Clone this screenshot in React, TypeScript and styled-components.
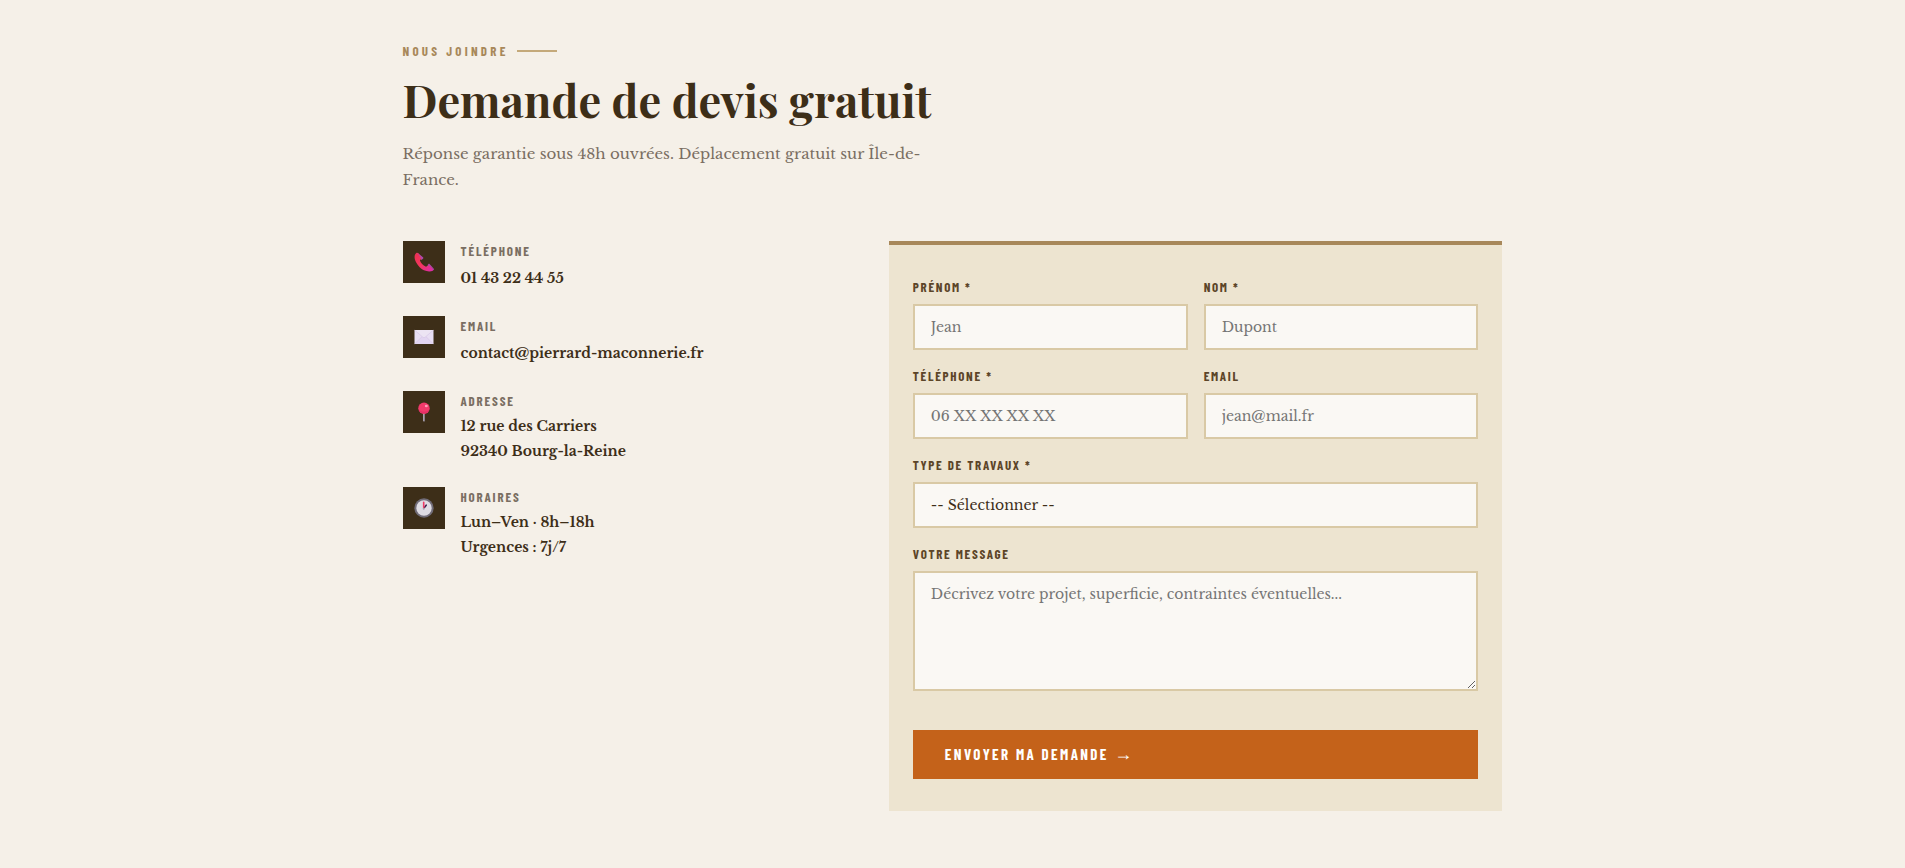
import React from "react";
import styled, { createGlobalStyle } from "styled-components";

const serif = `"Libre Baskerville", "Noto Serif", "Liberation Serif", serif`;
const display = `"Playfair Display", "Liberation Serif", serif`;
const condensed = `"Barlow Condensed", "Liberation Sans", sans-serif`;

const color = {
  page: "#f5f0e8",
  panel: "#ede4d0",
  field: "#faf8f4",
  fieldBorder: "#d9c9a5",
  sand: "#c4a97a",
  stone: "#a8885a",
  dark: "#3d2e18",
  brown: "#5c4528",
  muted: "#7a6e62",
  orange: "#c4621a",
};

const GlobalStyle = createGlobalStyle`
  *, *::before, *::after { box-sizing: border-box; }
  body {
    margin: 0;
    background: ${color.page};
    color: ${color.dark};
    font-family: ${serif};
    font-size: 16px;
  }
`;

const Section = styled.section`
  padding: 40px 32px 56px;
`;

const Container = styled.div`
  max-width: 1100px;
  margin: 0 auto;
`;

const Header = styled.header`
  max-width: 560px;
  margin-bottom: 48px;
`;

const Eyebrow = styled.p`
  display: flex;
  align-items: center;
  gap: 8px;
  margin: 0 0 10px;
  color: ${color.stone};
  font: 700 13px/22px ${condensed};
  letter-spacing: 0.25em;
  text-transform: uppercase;

  &::after {
    content: "";
    width: 40px;
    height: 2px;
    background: ${color.sand};
  }
`;

const Title = styled.h2`
  margin: 0 0 15px;
  font: 700 45px/54px ${display};
`;

const Lead = styled.p`
  margin: 0;
  color: ${color.muted};
  font-size: 15px;
  line-height: 26px;
`;

const Columns = styled.div`
  display: grid;
  grid-template-columns: 1fr 1.4fr;
  gap: 48px;
  align-items: start;

  @media (max-width: 800px) {
    grid-template-columns: 1fr;
  }
`;

const ContactList = styled.div`
  display: flex;
  flex-direction: column;
  gap: 23px;
`;

const ContactItem = styled.div`
  display: flex;
  align-items: flex-start;
  gap: 16px;
`;

const IconTile = styled.div`
  display: flex;
  align-items: center;
  justify-content: center;
  flex: none;
  width: 42px;
  height: 42px;
  background: ${color.dark};
`;

const ContactLabel = styled.div`
  margin-bottom: 3px;
  color: ${color.muted};
  font: 700 13px/20px ${condensed};
  letter-spacing: 0.14em;
  text-transform: uppercase;
`;

const ContactValue = styled.div<{ $single?: boolean }>`
  font-size: 14px;
  font-weight: 700;
  line-height: ${(p) => (p.$single ? 29 : 25)}px;
`;

const ContactLink = styled.a`
  color: inherit;
  text-decoration: none;
`;

const Form = styled.form`
  padding: 32px 24px;
  border-top: 4px solid ${color.stone};
  background: ${color.panel};
`;

const Row = styled.div`
  display: grid;
  grid-template-columns: 1fr 1fr;
  gap: 16px;
`;

const Field = styled.div`
  display: flex;
  flex-direction: column;
  margin-bottom: 16px;
`;

const Label = styled.label`
  margin-bottom: 7px;
  color: ${color.brown};
  font: 700 13px/20px ${condensed};
  letter-spacing: 0.13em;
  text-transform: uppercase;
`;

const control = `
  width: 100%;
  padding: 12px 16px;
  border: 2px solid ${color.fieldBorder};
  border-radius: 0;
  background: ${color.field};
  color: ${color.dark};
  font-family: ${serif};
  font-size: 14px;
  outline: none;
  &::placeholder { color: #757575; }
  &:focus { border-color: ${color.stone}; }
`;

const Input = styled.input`
  ${control}
  height: 46px;
`;

const Select = styled.select`
  ${control}
  height: 46px;
  appearance: none;
`;

const TextArea = styled.textarea`
  ${control}
  display: block;
  height: 120px;
  resize: vertical;
`;

const Submit = styled.button`
  display: block;
  width: 100%;
  margin-top: 39px;
  padding: 12px 32px;
  border: 0;
  background: ${color.orange};
  color: #fff;
  font: 700 15px/25px ${condensed};
  letter-spacing: 0.16em;
  text-align: left;
  text-transform: uppercase;
  cursor: pointer;
`;

const Arrow = styled.span`
  font: 400 18px/18px "Liberation Sans", sans-serif;
`;

const PhoneIcon = () => (
  <svg width="20" height="20" viewBox="0 0 20 20" aria-hidden="true">
    <defs>
      <linearGradient id="phone" x1="0" y1="0" x2="1" y2="1">
        <stop offset="0" stopColor="#e83050" />
        <stop offset="0.5" stopColor="#f5365f" />
        <stop offset="1" stopColor="#d92bb0" />
      </linearGradient>
    </defs>
    <path d="M2 1.200C.5 2.600.2 5 1 7.700c1.200 4 5 8.600 9 10.600 2.900 1.400 6.800 1.500 8.800.4.600-.4.700-1.100.2-1.700l-3-3.700c-.5-.6-1.200-.5-1.700 0l-2.300 1.500C8.900 13.400 6.700 11 5.900 8.300l1.600-1.600c.6-.5.600-1.100.1-1.700L4.400 1.300c-.6-.7-1.700-.7-2.400-.1z" fill="url(#phone)" />
    <path d="M3.500.9 9 5.200c.5.500.4 1.200-.1 1.600L7.400 8.200C7.200 6 5.400 3 3 1.100zM15 11.600l4.600 5c.5.600.4 1.300-.2 1.700-1.300-2.400-3.700-4.300-6-5z" fill="#b048a8" />
  </svg>
);

const MailIcon = () => (
  <svg width="20" height="20" viewBox="0 0 20 20" aria-hidden="true">
    <path d="M.5 3h19v14H.5z" fill="#e8def3" />
    <path d="M.5 17 8 9.500h4l7.500 7.500z" fill="#e2d5f1" />
    <path d="M.5 3h19L11 10.300a1.500 1.500 0 0 1-2 0z" fill="#ece4f3" />
    <path d="m.8 3.300 8.200 7a1.500 1.500 0 0 0 2 0l8.200-7M.8 16.700l7.200-7M19.200 16.700l-7.200-7" fill="none" stroke="#d5c5e6" strokeWidth=".6" />
  </svg>
);

const PinIcon = () => (
  <svg width="20" height="20" viewBox="0 0 20 20" aria-hidden="true">
    <path d="M9.200 10h1.700v9c0 .8-1.700.8-1.700 0z" fill="#8f8996" />
    <path d="M9.200 11h.7v8.200c-.4 0-.7-.2-.7-.5z" fill="#b9b3c0" />
    <circle cx="10" cy="6.200" r="5.700" fill="#f23a6b" />
    <path d="M4.500 7.500a5.700 5.700 0 0 0 11-.2c-2.500 3-8 3.100-11 .2z" fill="#e52f68" />
    <ellipse cx="12.300" cy="4" rx="1.500" ry="1.300" fill="#ff9eb8" />
  </svg>
);

const ClockIcon = () => (
  <svg width="20" height="20" viewBox="0 0 20 20" aria-hidden="true">
    <circle cx="10" cy="10" r="9.700" fill="#716c78" />
    <circle cx="10" cy="10" r="7.700" fill="#dfdce3" />
    <path d="m10.400 9.500 1.800-2.300" stroke="#3a2652" strokeWidth="1.600" strokeLinecap="round" />
    <path d="M9.700 9.500V4.400" stroke="#ee3c66" strokeWidth="1.600" strokeLinecap="round" />
    <circle cx="9.700" cy="10.800" r="1" fill="#a8a2b0" />
  </svg>
);

const App = () => (
  <>
    <GlobalStyle />
    <Section>
      <Container>
        <Header>
          <Eyebrow>Nous joindre</Eyebrow>
          <Title>Demande de devis gratuit</Title>
          <Lead>Réponse garantie sous 48h ouvrées. Déplacement gratuit sur Île-de-France.</Lead>
        </Header>
        <Columns>
          <ContactList>
            <ContactItem>
              <IconTile><PhoneIcon /></IconTile>
              <div>
                <ContactLabel>Téléphone</ContactLabel>
                <ContactValue $single>
                  <ContactLink href="tel:+33143224455">01 43 22 44 55</ContactLink>
                </ContactValue>
              </div>
            </ContactItem>
            <ContactItem>
              <IconTile><MailIcon /></IconTile>
              <div>
                <ContactLabel>Email</ContactLabel>
                <ContactValue $single>
                  <ContactLink href="mailto:contact@pierrard-maconnerie.fr">contact@pierrard-maconnerie.fr</ContactLink>
                </ContactValue>
              </div>
            </ContactItem>
            <ContactItem>
              <IconTile><PinIcon /></IconTile>
              <div>
                <ContactLabel>Adresse</ContactLabel>
                <ContactValue>12 rue des Carriers<br />92340 Bourg-la-Reine</ContactValue>
              </div>
            </ContactItem>
            <ContactItem>
              <IconTile><ClockIcon /></IconTile>
              <div>
                <ContactLabel>Horaires</ContactLabel>
                <ContactValue>Lun–Ven · 8h–18h<br />Urgences : 7j/7</ContactValue>
              </div>
            </ContactItem>
          </ContactList>

          <Form onSubmit={(e) => e.preventDefault()}>
            <Row>
              <Field>
                <Label htmlFor="prenom">Prénom *</Label>
                <Input id="prenom" type="text" placeholder="Jean" />
              </Field>
              <Field>
                <Label htmlFor="nom">Nom *</Label>
                <Input id="nom" type="text" placeholder="Dupont" />
              </Field>
            </Row>
            <Row>
              <Field>
                <Label htmlFor="tel">Téléphone *</Label>
                <Input id="tel" type="tel" placeholder="06 XX XX XX XX" />
              </Field>
              <Field>
                <Label htmlFor="email">Email</Label>
                <Input id="email" type="email" placeholder="jean@mail.fr" />
              </Field>
            </Row>
            <Field>
              <Label htmlFor="travaux">Type de travaux *</Label>
              <Select id="travaux" defaultValue="">
                <option value="">-- Sélectionner --</option>
              </Select>
            </Field>
            <Field>
              <Label htmlFor="message">Votre message</Label>
              <TextArea id="message" placeholder="Décrivez votre projet, superficie, contraintes éventuelles..." />
            </Field>
            <Submit type="submit">Envoyer ma demande <Arrow>→</Arrow></Submit>
          </Form>
        </Columns>
      </Container>
    </Section>
  </>
);

export default App;
